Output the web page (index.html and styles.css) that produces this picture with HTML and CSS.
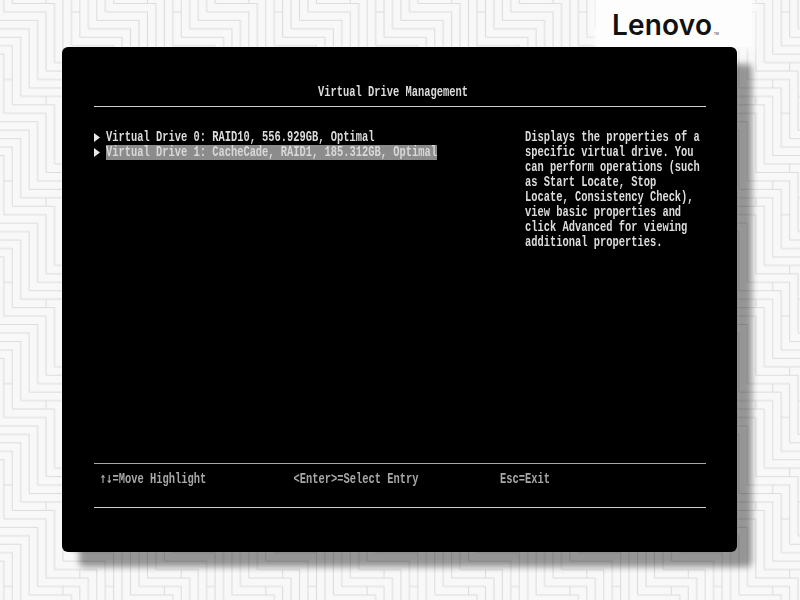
FILE: index.html
```html
<!DOCTYPE html>
<html lang="en">
<head>
<meta charset="utf-8">
<title>Virtual Drive Management</title>
<link rel="stylesheet" href="styles.css">
</head>
<body>
<svg class="wall" width="800" height="600" aria-hidden="true">
  <defs>
    <path id="bricks" d="M0 12h5v7M1 11h5v7M2 10h5v7M3 9h5v7M4 8h5v7M5 7h5v7M6 6h5v7M7 5h5v7M8 4h5v7M9 3h5v7M10 2h5v7M11 1h5v7M3 12v1M5 10v1M7 8v1M6 14h1M8 12h1M10 10h1"/>
    <pattern id="herringbone" patternUnits="userSpaceOnUse" x="20.7" y="-5" width="101.4" height="101.4">
      <g class="brick-lines" transform="scale(8.45)">
        <use href="#bricks"/>
        <use href="#bricks" x="-12"/>
        <use href="#bricks" y="-12"/>
        <use href="#bricks" x="-12" y="-12"/>
      </g>
    </pattern>
  </defs>
  <rect width="800" height="600" fill="url(#herringbone)"/>
</svg>
<div class="logo"><span class="logo-name">Lenovo</span><span class="logo-tm">TM</span></div>
<main class="panel">
  <header class="title"><span class="t">Virtual Drive Management</span></header>
  <section class="body">
    <ul class="menu">
      <li class="entry"><svg class="arrow" width="6" height="9"><polygon points="0,0 6,4.5 0,9"/></svg><span class="label"><span class="t">Virtual Drive 0: RAID10, 556.929GB, Optimal</span></span></li>
      <li class="entry selected"><svg class="arrow" width="6" height="9"><polygon points="0,0 6,4.5 0,9"/></svg><span class="label"><span class="t">Virtual Drive 1: CacheCade, RAID1, 185.312GB, Optimal</span></span></li>
    </ul>
    <aside class="help">
      <span class="t">Displays the properties of a</span>
      <span class="t">specific virtual drive. You</span>
      <span class="t">can perform operations (such</span>
      <span class="t">as Start Locate, Stop</span>
      <span class="t">Locate, Consistency Check),</span>
      <span class="t">view basic properties and</span>
      <span class="t">click Advanced for viewing</span>
      <span class="t">additional properties.</span>
    </aside>
  </section>
  <footer class="keys">
    <span class="t"><span class="updown">↑↓</span>=Move Highlight</span>
    <span class="t">&lt;Enter&gt;=Select Entry</span>
    <span class="t">Esc=Exit</span>
  </footer>
</main>
</body>
</html>
```
FILE: styles.css
```css
* { box-sizing: border-box; }
html, body { margin: 0; height: 100%; }
body {
  width: 800px;
  height: 600px;
  overflow: hidden;
  background: #f8f8f8;
  padding: 47px 63px 48px 62px;
  position: relative;
}
.wall { position: absolute; left: 0; top: 0; }
.brick-lines { fill: none; stroke: #dcdcdc; stroke-width: 0.13; }
.logo {
  position: absolute;
  left: 596px;
  top: 0;
  width: 156px;
  height: 47px;
  background: #fdfdfd;
  box-shadow: 0 0 8px 3px rgba(253, 253, 253, 0.8);
  color: #111;
  font-family: Inter, "Liberation Sans", sans-serif;
}
.logo-name {
  position: absolute;
  left: 16px;
  top: 8px;
  font-size: 28px;
  line-height: 34px;
  font-weight: 600;
  letter-spacing: 0.2px;
}
.logo-tm {
  position: absolute;
  left: 118px;
  top: 32px;
  font-size: 3px;
  line-height: 4px;
}
.panel {
  position: relative;
  width: 675px;
  height: 505px;
  padding: 0 31px 0 32px;
  display: flex;
  flex-direction: column;
  background: #000;
  border-radius: 6px;
  box-shadow: 16px 16px 6px -1px rgba(0, 0, 0, 0.4);
  color: #dcdcdc;
  font-family: "Liberation Mono", monospace;
  font-size: 10.417px;
  font-weight: 700;
  line-height: 15px;
}
.t {
  display: inline-block;
  vertical-align: top;
  margin: 2.25px 0;
  line-height: 10.5px;
  transform: scaleY(1.42);
  filter: blur(0.25px);
  white-space: pre;
}
.updown {
  font-family: "DejaVu Sans Mono", monospace;
  font-size: 10.38px;
  line-height: 1px;
}
.title {
  height: 60px;
  padding: 38px 14px 0 0;
  border-bottom: 1px solid #d0d0d0;
  text-align: center;
}
.body {
  flex: 1;
  display: grid;
  grid-template-columns: 431px 1fr;
  padding-top: 23px;
}
.menu { margin: 0; padding: 0; list-style: none; }
.entry { display: flex; align-items: center; height: 15px; gap: 6px; }
.arrow { fill: #e8e8e8; flex: none; }
.label { display: block; height: 15px; }
.selected .label { background: #8c8c8c; color: #d8d8d8; }
.help { display: flex; flex-direction: column; align-items: flex-start; }
.keys {
  height: 45px;
  margin-bottom: 44px;
  padding: 8px 0 0 6px;
  display: grid;
  grid-template-columns: 193.5px 206.5px 1fr;
  align-items: start;
  border-top: 1px solid #a8a8a8;
  border-bottom: 1px solid #d0d0d0;
  color: #a8a8a8;
}
```
